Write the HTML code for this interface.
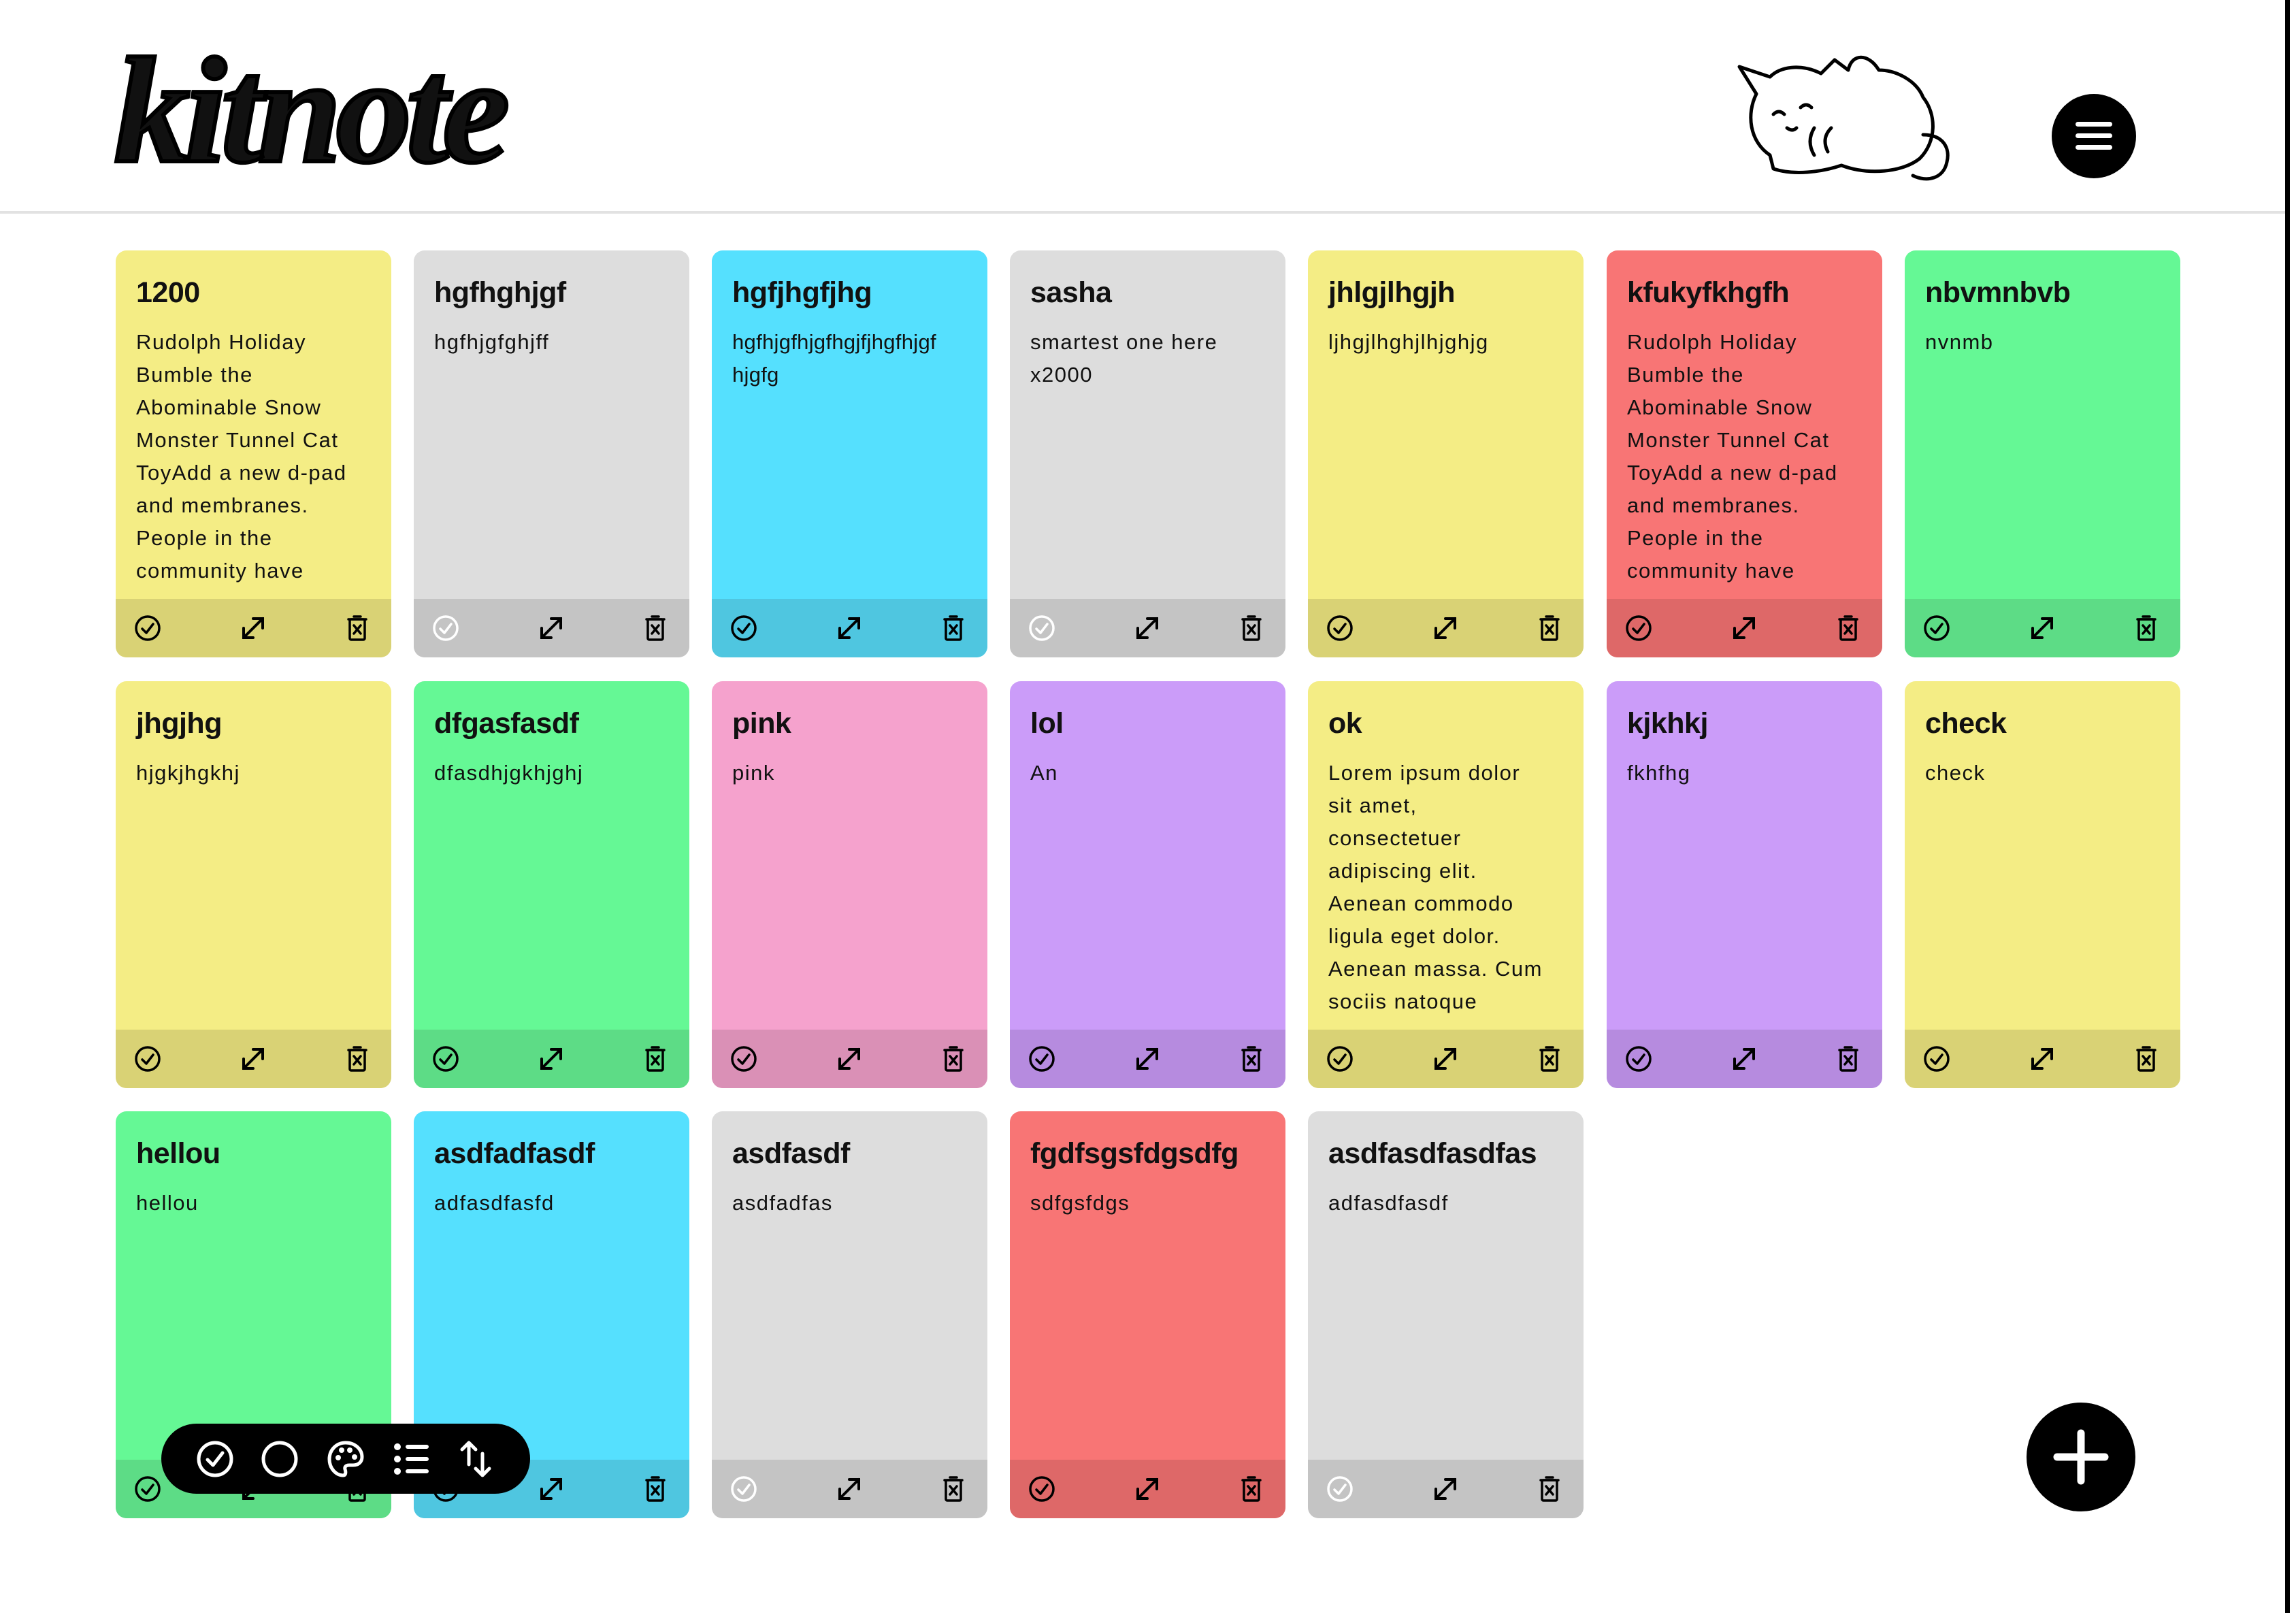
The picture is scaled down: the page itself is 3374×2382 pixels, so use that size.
<!DOCTYPE html>
<html><head><meta charset="utf-8"><style>
*{margin:0;padding:0;box-sizing:border-box}
body{width:3374px;height:2382px;background:#fff;font-family:"Liberation Sans",sans-serif;position:relative;overflow:hidden;color:#111}
.hdr{position:absolute;left:0;top:0;width:3361px;height:314px;border-bottom:4px solid #e2e2e2}
.logo{position:absolute;left:168px;top:52px;font-family:"Liberation Serif",serif;font-style:italic;font-weight:bold;font-size:222px;letter-spacing:-8px;line-height:1;-webkit-text-stroke:6px #000}
.vline{position:absolute;left:3358px;top:0;width:7px;height:2370px;background:#000}
.menu{position:absolute;left:3015px;top:138px;width:124px;height:124px;border-radius:50%;background:#000}
.menu i{position:absolute;left:35px;width:54px;height:7px;border-radius:4px;background:#fff}
.card{position:absolute;width:405px;height:598px;border-radius:16px;overflow:hidden}
.card h2{font-size:43px;font-weight:bold;padding:34px 30px 0;line-height:56px;letter-spacing:-0.5px}
.card p{font-size:31px;line-height:48px;padding:21px 45px 0 30px;letter-spacing:1.5px;word-wrap:break-word}
.ft{position:absolute;left:0;bottom:0;width:100%;height:86px}
.ft svg{position:absolute;top:23px;width:40px;height:40px}
.y{background:#f4ed85}.y .ft{background:#d9d275}
.g{background:#dddddd}.g .ft{background:#c4c4c4}
.c{background:#55e0fe}.c .ft{background:#4fc6e0}
.r{background:#f87575}.r .ft{background:#de6868}
.n{background:#65f895}.n .ft{background:#5ddc86}
.p{background:#f5a2cd}.p .ft{background:#da90b6}
.u{background:#cb9cf9}.u .ft{background:#b68bdf}
.tb{position:absolute;left:237px;top:2092px;width:542px;height:103px;border-radius:52px;background:#000}
.tb svg{position:absolute;top:24px;width:56px;height:56px}
.plus{position:absolute;left:2978px;top:2061px;width:160px;height:160px;border-radius:50%;background:#000}
</style></head><body>
<svg width="0" height="0" style="position:absolute"><defs>
<g id="chk"><circle cx="20" cy="20" r="17" fill="none" stroke-width="3.5"/><path d="M12 21l6 6 10-13" fill="none" stroke-width="3.5" stroke-linecap="round" stroke-linejoin="round"/></g>
<g id="exp" fill="none" stroke="#000" stroke-width="4" stroke-linecap="round"><path d="M6 34L34 6M20 6h14v14M6 20v14h14"/></g>
<g id="del" fill="none" stroke="#000" stroke-width="3.5"><rect x="9" y="7" width="22" height="30" rx="2"/><path d="M7 7h26M15 3h10M15 16l10 12M25 16l-10 12" stroke-linecap="round"/></g>
</defs></svg>
<div class="hdr">
<div class="logo">kitnote</div>
<svg style="position:absolute;left:2546px;top:58px" width="340" height="216" viewBox="0 0 340 216" fill="none" stroke="#000" stroke-width="5" stroke-linecap="round" stroke-linejoin="round">
<path d="M10 40 L35 80 C20 110 25 150 55 170 L60 190 C90 200 130 195 160 185 C200 200 250 195 275 175 C300 150 300 110 280 85 C270 60 240 45 215 45 C200 20 175 20 170 45 L150 30 L130 50 C100 35 70 40 55 55 Z"/>
<path d="M280 140 C310 140 320 160 315 180 C310 205 285 210 265 200"/>
<path d="M60 110 q8 -8 16 0 M100 100 q8 -8 16 0 M80 130 q8 6 14 0 M120 170 q-12 -20 0 -40 M140 165 q-10 -20 5 -35"/>
</svg>
<div class="menu"><i style="top:41px"></i><i style="top:58px"></i><i style="top:75px"></i></div>
</div>
<div class="vline"></div>

<!-- row 1 -->
<div class="card y" style="left:170px;top:368px"><h2>1200</h2><p>Rudolph Holiday Bumble the Abominable Snow Monster Tunnel Cat ToyAdd a new d-pad and membranes. People in the community have</p><div class="ft"><svg style="left:27px" viewBox="0 0 40 40"><use href="#chk" stroke="#000"/></svg><svg style="left:182px" viewBox="0 0 40 40"><use href="#exp"/></svg><svg style="left:335px" viewBox="0 0 40 40"><use href="#del"/></svg></div></div>
<div class="card g" style="left:608px;top:368px"><h2>hgfhghjgf</h2><p>hgfhjgfghjff</p><div class="ft"><svg style="left:27px" viewBox="0 0 40 40"><use href="#chk" stroke="#fff"/></svg><svg style="left:182px" viewBox="0 0 40 40"><use href="#exp"/></svg><svg style="left:335px" viewBox="0 0 40 40"><use href="#del"/></svg></div></div>
<div class="card c" style="left:1046px;top:368px"><h2>hgfjhgfjhg</h2><p style="letter-spacing:0.3px;padding-right:20px">hgfhjgfhjgfhgjfjhgfhjgf hjgfg</p><div class="ft"><svg style="left:27px" viewBox="0 0 40 40"><use href="#chk" stroke="#000"/></svg><svg style="left:182px" viewBox="0 0 40 40"><use href="#exp"/></svg><svg style="left:335px" viewBox="0 0 40 40"><use href="#del"/></svg></div></div>
<div class="card g" style="left:1484px;top:368px"><h2>sasha</h2><p>smartest one here x2000</p><div class="ft"><svg style="left:27px" viewBox="0 0 40 40"><use href="#chk" stroke="#fff"/></svg><svg style="left:182px" viewBox="0 0 40 40"><use href="#exp"/></svg><svg style="left:335px" viewBox="0 0 40 40"><use href="#del"/></svg></div></div>
<div class="card y" style="left:1922px;top:368px"><h2>jhlgjlhgjh</h2><p>ljhgjlhghjlhjghjg</p><div class="ft"><svg style="left:27px" viewBox="0 0 40 40"><use href="#chk" stroke="#000"/></svg><svg style="left:182px" viewBox="0 0 40 40"><use href="#exp"/></svg><svg style="left:335px" viewBox="0 0 40 40"><use href="#del"/></svg></div></div>
<div class="card r" style="left:2361px;top:368px"><h2>kfukyfkhgfh</h2><p>Rudolph Holiday Bumble the Abominable Snow Monster Tunnel Cat ToyAdd a new d-pad and membranes. People in the community have</p><div class="ft"><svg style="left:27px" viewBox="0 0 40 40"><use href="#chk" stroke="#000"/></svg><svg style="left:182px" viewBox="0 0 40 40"><use href="#exp"/></svg><svg style="left:335px" viewBox="0 0 40 40"><use href="#del"/></svg></div></div>
<div class="card n" style="left:2799px;top:368px"><h2>nbvmnbvb</h2><p>nvnmb</p><div class="ft"><svg style="left:27px" viewBox="0 0 40 40"><use href="#chk" stroke="#000"/></svg><svg style="left:182px" viewBox="0 0 40 40"><use href="#exp"/></svg><svg style="left:335px" viewBox="0 0 40 40"><use href="#del"/></svg></div></div>

<!-- row 2 -->
<div class="card y" style="left:170px;top:1001px"><h2>jhgjhg</h2><p>hjgkjhgkhj</p><div class="ft"><svg style="left:27px" viewBox="0 0 40 40"><use href="#chk" stroke="#000"/></svg><svg style="left:182px" viewBox="0 0 40 40"><use href="#exp"/></svg><svg style="left:335px" viewBox="0 0 40 40"><use href="#del"/></svg></div></div>
<div class="card n" style="left:608px;top:1001px"><h2>dfgasfasdf</h2><p>dfasdhjgkhjghj</p><div class="ft"><svg style="left:27px" viewBox="0 0 40 40"><use href="#chk" stroke="#000"/></svg><svg style="left:182px" viewBox="0 0 40 40"><use href="#exp"/></svg><svg style="left:335px" viewBox="0 0 40 40"><use href="#del"/></svg></div></div>
<div class="card p" style="left:1046px;top:1001px"><h2>pink</h2><p>pink</p><div class="ft"><svg style="left:27px" viewBox="0 0 40 40"><use href="#chk" stroke="#000"/></svg><svg style="left:182px" viewBox="0 0 40 40"><use href="#exp"/></svg><svg style="left:335px" viewBox="0 0 40 40"><use href="#del"/></svg></div></div>
<div class="card u" style="left:1484px;top:1001px"><h2>lol</h2><p>An</p><div class="ft"><svg style="left:27px" viewBox="0 0 40 40"><use href="#chk" stroke="#000"/></svg><svg style="left:182px" viewBox="0 0 40 40"><use href="#exp"/></svg><svg style="left:335px" viewBox="0 0 40 40"><use href="#del"/></svg></div></div>
<div class="card y" style="left:1922px;top:1001px"><h2>ok</h2><p style="padding-right:10px;white-space:nowrap">Lorem ipsum dolor<br>sit amet,<br>consectetuer<br>adipiscing elit.<br>Aenean commodo<br>ligula eget dolor.<br>Aenean massa. Cum<br>sociis natoque</p><div class="ft"><svg style="left:27px" viewBox="0 0 40 40"><use href="#chk" stroke="#000"/></svg><svg style="left:182px" viewBox="0 0 40 40"><use href="#exp"/></svg><svg style="left:335px" viewBox="0 0 40 40"><use href="#del"/></svg></div></div>
<div class="card u" style="left:2361px;top:1001px"><h2>kjkhkj</h2><p>fkhfhg</p><div class="ft"><svg style="left:27px" viewBox="0 0 40 40"><use href="#chk" stroke="#000"/></svg><svg style="left:182px" viewBox="0 0 40 40"><use href="#exp"/></svg><svg style="left:335px" viewBox="0 0 40 40"><use href="#del"/></svg></div></div>
<div class="card y" style="left:2799px;top:1001px"><h2>check</h2><p>check</p><div class="ft"><svg style="left:27px" viewBox="0 0 40 40"><use href="#chk" stroke="#000"/></svg><svg style="left:182px" viewBox="0 0 40 40"><use href="#exp"/></svg><svg style="left:335px" viewBox="0 0 40 40"><use href="#del"/></svg></div></div>

<!-- row 3 -->
<div class="card n" style="left:170px;top:1633px"><h2>hellou</h2><p>hellou</p><div class="ft"><svg style="left:27px" viewBox="0 0 40 40"><use href="#chk" stroke="#000"/></svg><svg style="left:182px" viewBox="0 0 40 40"><use href="#exp"/></svg><svg style="left:335px" viewBox="0 0 40 40"><use href="#del"/></svg></div></div>
<div class="card c" style="left:608px;top:1633px"><h2>asdfadfasdf</h2><p>adfasdfasfd</p><div class="ft"><svg style="left:27px" viewBox="0 0 40 40"><use href="#chk" stroke="#000"/></svg><svg style="left:182px" viewBox="0 0 40 40"><use href="#exp"/></svg><svg style="left:335px" viewBox="0 0 40 40"><use href="#del"/></svg></div></div>
<div class="card g" style="left:1046px;top:1633px"><h2>asdfasdf</h2><p>asdfadfas</p><div class="ft"><svg style="left:27px" viewBox="0 0 40 40"><use href="#chk" stroke="#fff"/></svg><svg style="left:182px" viewBox="0 0 40 40"><use href="#exp"/></svg><svg style="left:335px" viewBox="0 0 40 40"><use href="#del"/></svg></div></div>
<div class="card r" style="left:1484px;top:1633px"><h2>fgdfsgsfdgsdfg</h2><p>sdfgsfdgs</p><div class="ft"><svg style="left:27px" viewBox="0 0 40 40"><use href="#chk" stroke="#000"/></svg><svg style="left:182px" viewBox="0 0 40 40"><use href="#exp"/></svg><svg style="left:335px" viewBox="0 0 40 40"><use href="#del"/></svg></div></div>
<div class="card g" style="left:1922px;top:1633px"><h2>asdfasdfasdfas</h2><p>adfasdfasdf</p><div class="ft"><svg style="left:27px" viewBox="0 0 40 40"><use href="#chk" stroke="#fff"/></svg><svg style="left:182px" viewBox="0 0 40 40"><use href="#exp"/></svg><svg style="left:335px" viewBox="0 0 40 40"><use href="#del"/></svg></div></div>

<div class="tb">
<svg style="left:51px" viewBox="0 0 56 56" fill="none" stroke="#fff" stroke-width="5" stroke-linecap="round" stroke-linejoin="round"><circle cx="28" cy="28" r="24"/><path d="M17 29l8 8 14-18"/></svg>
<svg style="left:146px" viewBox="0 0 56 56" fill="none" stroke="#fff" stroke-width="5"><circle cx="28" cy="28" r="24"/></svg>
<svg style="left:243px" viewBox="0 0 56 56" fill="none" stroke="#fff" stroke-width="5" stroke-linejoin="round"><path d="M28 4C14 4 4 15 4 28c0 14 10 24 20 24 5 0 4-6 3-9-1-4 2-6 6-6h6c8 0 13-5 13-12C52 13 41 4 28 4z"/><g fill="#fff" stroke="none"><circle cx="17" cy="26" r="4"/><circle cx="22" cy="15" r="4"/><circle cx="34" cy="15" r="4"/><circle cx="41" cy="25" r="4"/></g></svg>
<svg style="left:340px" viewBox="0 0 56 56" fill="none" stroke="#fff" stroke-width="6" stroke-linecap="round"><path d="M22 10h28M22 28h28M22 46h28"/><g fill="#fff" stroke="none"><circle cx="7" cy="10" r="5"/><circle cx="7" cy="28" r="5"/><circle cx="7" cy="46" r="5"/></g></svg>
<svg style="left:434px" viewBox="0 0 56 56" fill="none" stroke="#fff" stroke-width="5" stroke-linecap="round" stroke-linejoin="round"><path d="M18 36V4M8 14L18 4l10 10M38 20v32M28 42l10 10 10-10"/></svg>
</div>

<div class="plus"><svg width="160" height="160" viewBox="0 0 160 160"><path d="M80 45v70M45 80h70" stroke="#fff" stroke-width="11" stroke-linecap="round"/></svg></div>
</body></html>
